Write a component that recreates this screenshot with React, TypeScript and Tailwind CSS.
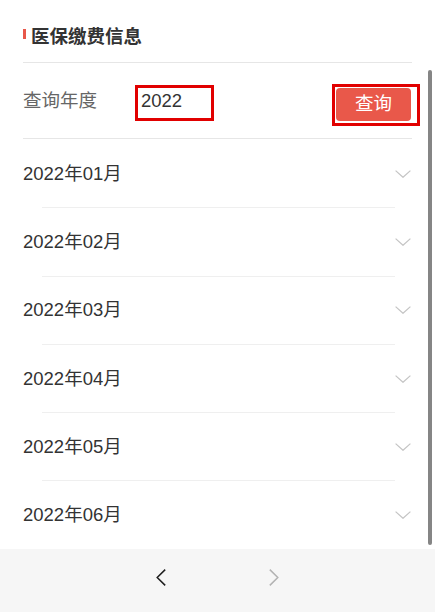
import React from "react";

const months = ["01", "02", "03", "04", "05", "06"];

function ChevronDown() {
  return (
    <svg width="16" height="8" viewBox="0 0 16 8" fill="none">
      <polyline points="0.6,0.6 8,7.3 15.4,0.6" stroke="#c4c4c4" strokeWidth="1.2" />
    </svg>
  );
}

export default function App() {
  const font = { fontFamily: '"Liberation Sans", "Noto Sans CJK SC", sans-serif' };
  return (
    <div
      className="relative w-[435px] h-[612px] bg-white flex flex-col overflow-hidden"
      style={font}
    >
      <div className="flex-1 px-[23px] flex flex-col">
        {/* title */}
        <div className="h-[63px] pt-[12px] border-b border-[#e6e6e6] flex items-center">
          <div className="w-[3px] h-[10px] mb-[6px] bg-[#e8574a]" />
          <div className="ml-[5px] text-[18.5px] font-bold text-[#333333] leading-[24px]">
            医保缴费信息
          </div>
        </div>
        {/* query row */}
        <div className="h-[76px] border-b border-[#e6e6e6] flex items-start">
          <div className="mt-[26px] text-[18.5px] text-[#666666] leading-[24px] w-[72px] whitespace-nowrap">
            查询年度
          </div>
          <div className="ml-[40px] mt-[22px] w-[79px] h-[36px] border-[3px] border-[#e10000] pl-[3px] pt-[2px] text-[18.5px] text-[#333333] leading-[22px]">
            2022
          </div>
          <div className="flex-1" />
          <div className="-mr-[8px] mt-[21px] w-[88px] h-[42px] border-[3px] border-[#e10000] pl-[1px] pt-[1px]">
            <div className="w-[75px] h-[33px] rounded-[4px] bg-[#e9584a] flex items-center justify-center text-white text-[18.5px] leading-none">
              查询
            </div>
          </div>
        </div>
        {/* month rows */}
        {months.map((m, i) => (
          <div key={m} className="flex flex-col">
            <div
              className={
                i === 0
                  ? "h-px ml-[19px] mr-[17px] bg-transparent"
                  : "h-px ml-[19px] mr-[17px] bg-[#efefef]"
              }
            />
            <div className="h-[67.3px] flex items-center justify-between">
              <span className="text-[18.5px] text-[#333333] leading-[24px]">
                2022年{m}月
              </span>
              <span className="mr-[1px] flex">
                <ChevronDown />
              </span>
            </div>
          </div>
        ))}
      </div>
      {/* bottom bar */}
      <div className="h-[64px] bg-[#f6f6f6] flex items-start justify-center pt-[20px] gap-[103px]">
        <svg width="10" height="17" viewBox="0 0 10 17" fill="none">
          <polyline points="9.2,0.6 1.2,8.5 9.2,16.4" stroke="#1f1f1f" strokeWidth="1.5" />
        </svg>
        <svg width="10" height="17" viewBox="0 0 10 17" fill="none">
          <polyline points="0.8,0.6 8.8,8.5 0.8,16.4" stroke="#b3b3b3" strokeWidth="1.5" />
        </svg>
      </div>
      {/* overlay scrollbar */}
      <div className="absolute left-[428px] top-[70px] w-[4px] h-[475px] rounded-full bg-[#858585]" />
    </div>
  );
}
